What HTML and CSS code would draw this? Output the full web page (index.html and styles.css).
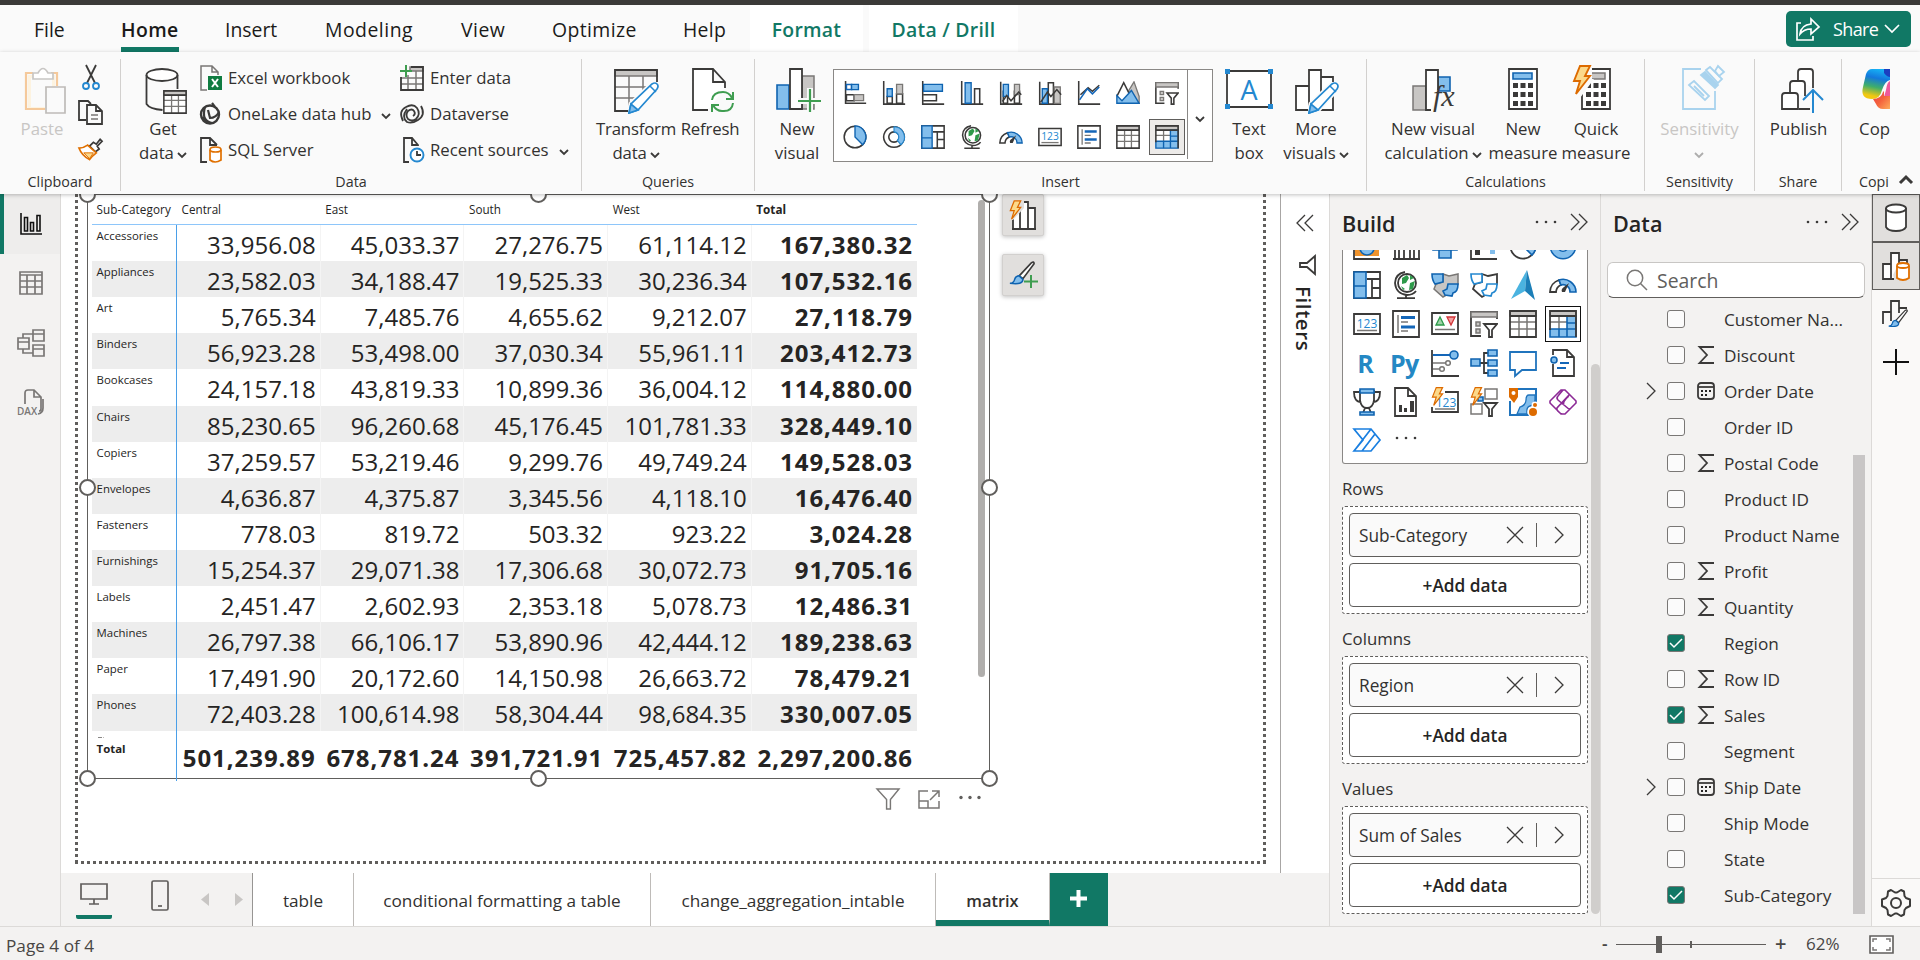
FILE: index.html
```html
<!DOCTYPE html>
<html lang="en">
<head>
<meta charset="utf-8">
<title>Report editor</title>
<link rel="stylesheet" href="styles.css">
</head>
<body>
<svg class="defs" width="0" height="0">
<defs>
<linearGradient id="cop" x1="0.55" y1="0" x2="0.35" y2="1"><stop offset="0" stop-color="#16b1f5"/><stop offset=".3" stop-color="#1478dc"/><stop offset=".6" stop-color="#3fae6a"/><stop offset=".9" stop-color="#f2c811"/></linearGradient>
<linearGradient id="cop2" x1="0" y1="0" x2="1" y2="1"><stop offset="0" stop-color="#e8404a"/><stop offset=".5" stop-color="#f4623c"/><stop offset="1" stop-color="#fdae5c"/></linearGradient>
<symbol id="chev" viewBox="0 0 10 8"><path d="M1 2l4 4 4-4" class="d" stroke-width="1.8"/></symbol>
<symbol id="sbar" viewBox="0 0 28 28"><path class="d" d="M3 0v26h24"/><path class="b" d="M4 4h6v6H4z" fill="#fff"/><path class="bf" d="M10 4h8v6h-8z"/><path class="d" d="M4 16h9v7H4z" fill="#fff"/><path class="gf" d="M13 16h11v7H13z"/></symbol>
<symbol id="scol" viewBox="0 0 28 28"><path class="d" d="M2 0v27h25"/><path class="d" d="M6 18h6v8H6z"/><path class="bf" d="M6 9h6v9H6z"/><path class="d" d="M17 15h7v11h-7z"/><path class="gf" d="M17 4h7v11h-7z"/></symbol>
<symbol id="bar" viewBox="0 0 28 28"><path class="d" d="M2 0v27h25M3 16h15v7H3"/><path class="bf" d="M3 4h22v8H3z"/></symbol>
<symbol id="col" viewBox="0 0 28 28"><path class="d" d="M2 0v27h25M17 26V9h6v17"/><path class="bf" d="M6 2h7v24H6z"/></symbol>
<symbol id="combo1" viewBox="0 0 28 28"><path class="d" d="M2 1v26h25M5 12h5v14H5zM18 12h6v14h-6z"/><path class="bf" d="M5 4h6v14H5z"/><path class="gf" d="M18 4h6v12h-6z"/><path class="d" d="M4 24l5-7 5 6 9-10 3 3"/></symbol>
<symbol id="combo2" viewBox="0 0 28 28"><path class="d" d="M2 1v26h25M12 27V2h6v25"/><path class="bf" d="M5 9h6v17H5z"/><path class="gf" d="M19 7h7v19h-7z"/><path class="d" d="M3 25l8-12 4 5 7-8 5 6"/></symbol>
<symbol id="line" viewBox="0 0 28 28"><path class="d" d="M2 0v27h25M4 16l9-8 5 4 8-7"/><path class="b" d="M3 22L12 9l6 6 8-8" stroke-width="2.2"/></symbol>
<symbol id="area" viewBox="0 0 28 28"><path class="gf" d="M15 11l6-10 6 17v8H16z"/><path class="d" d="M1 18L9 2l8 16" fill="#fff"/><path class="bf" d="M1 26v-9l6 6L18 11l9 15z"/></symbol>
<symbol id="slicer" viewBox="0 0 28 28"><path class="d" d="M11 26H1V2h26v7" fill="#fff"/><path class="gf" d="M1 2h26v5H1zM6 12h4v4H6zM6 19h4v4H6z"/><path class="d" d="M14 14h13l-5 6v7h-3v-7z" fill="#fff"/></symbol>
<symbol id="pie" viewBox="0 0 28 28"><circle cx="14" cy="14" r="12.6" class="d" fill="#fff"/><path class="bf" d="M14 1a13 13 0 0 1 9 22l-9-9z"/></symbol>
<symbol id="donut" viewBox="0 0 28 28"><path class="d" fill="#fff" fill-rule="evenodd" d="M14 2a12 12 0 1 0 .01 0zM14 8a6 6 0 1 1-.01 0z"/><path class="bfl" d="M14 2a12 12 0 0 1 8 21l-4-5a6 6 0 0 0-4-10z"/></symbol>
<symbol id="tree" viewBox="0 0 28 28"><path class="d" d="M1 1h26v26H1zM14 8h13M19 8v19M19 17h8" fill="#fff"/><path class="bf" d="M1 1h12v14H1zM1 15h12v12H1z"/></symbol>
<symbol id="globe" viewBox="0 0 28 28"><circle cx="15" cy="12" r="9" class="d" fill="#fff"/><path d="M10 7l5-3 2 3-3 5-4 1zM18 12l5-2-2 8-4 1zM18 4l4 3-4 2zM9 15l4 3-2 1z" fill="#2e9a4a"/><path class="d" d="M13 1Q3 3 3 12q1 11 12 12 6 0 9-4M14 24v3M5 27.200h18"/></symbol>
<symbol id="gauge" viewBox="0 0 28 28"><path class="d" d="M1 21a13 13 0 0 1 9-12l2 5a8 8 0 0 0-5 7z" fill="#fff"/><path class="bf" d="M10 9a13 13 0 0 1 17 12h-6a7 7 0 0 0-9-7z"/><path d="M20 12l-4 9h-3c-1-2 0-4 2-5z" fill="#3b3a39"/></symbol>
<symbol id="card" viewBox="0 0 28 28"><path class="d" d="M1 4h26v20H1z" fill="#fff" stroke-width="2"/><path class="g" d="M4 20.500h20"/><text x="14" y="17.500" text-anchor="middle" class="num">123</text></symbol>
<symbol id="mcard" viewBox="0 0 28 28"><path class="d" d="M1 1h26v26H1z" fill="#fff" stroke-width="2"/><path class="g" d="M6 5v18M9 12h7M9 21h7"/><path class="b3" d="M9 7.500h14M9 17h14"/></symbol>
<symbol id="kpi" viewBox="0 0 28 28"><path class="d" d="M1 3h26v21H1z" fill="#fff" stroke-width="2"/><path class="g" d="M4 19.500h20"/><path d="M5 15l4-8 4 8z" fill="#9fd3a8" stroke="#2e9a4a" stroke-width="1.300"/><path d="M16 7h8l-4 8z" fill="#f4a0a0" stroke="#d13438" stroke-width="1.300"/></symbol>
<symbol id="table" viewBox="0 0 28 28"><path class="g" d="M1 12h26M1 19h26M10 6v21M18 6v21"/><path class="gf" d="M1 1h26v5H1z"/><path class="d" d="M1 1h26v26H1zM1 6h26" stroke-width="2"/></symbol>
<symbol id="matrix" viewBox="0 0 28 28"><path d="M1 1h26v26H1z" fill="#fff"/><path class="g" d="M1 12h26M10 6v21"/><path class="gf" d="M1 1h26v5H1z"/><path class="bf" d="M18 6h9v7h-9zM18 13h9v6h-9zM1 19h9v8H1zM10 19h8v8h-8zM18 19h9v8h-9z"/><path class="d" d="M1 20V1h26v26M1 6h26" stroke-width="2"/></symbol>
<symbol id="bolt" viewBox="0 0 20 30"><path d="M8 1h10l-5 10h5L4 29l4-13H2z" fill="#fcd98a" stroke="#dd6b00" stroke-width="1.900"/></symbol>
<symbol id="dbl" viewBox="0 0 18 18"><path class="d1" d="M1 1l8 8-8 8M9 1l8 8-8 8"/></symbol>
<symbol id="dots" viewBox="0 0 22 4"><g fill="#3b3a39"><circle cx="2" cy="2" r="1.300"/><circle cx="11" cy="2" r="1.300"/><circle cx="20" cy="2" r="1.300"/></g></symbol>
<symbol id="sigma" viewBox="0 0 18 18"><path d="M17 1H2.500l7.500 8-7.500 8H17" class="d"/></symbol>
<symbol id="cal" viewBox="0 0 18 18"><rect x="1" y="1" width="16" height="16" rx="3" class="d"/><path class="d" d="M1 5h16"/><path d="M4 8h2v2H4zm4 0h2v2H8zm4 0h2v2h-2zM4 12h2v2H4zm4 0h2v2H8z" fill="#252423"/></symbol>
<symbol id="right" viewBox="0 0 10 18"><path class="d1" d="M1 1l8 8-8 8"/></symbol>
<symbol id="x" viewBox="0 0 18 18"><path class="d1" d="M1 1l16 16M17 1L1 17"/></symbol>
<symbol id="pencil" viewBox="0 0 32 32"><path d="M1 31l2-9L24 2q3-2 5 0t0 5L10 28z" fill="#fff" stroke="#fafafa" stroke-width="5"/><path d="M1 31l2-9L24 2q3-2 5 0t0 5L10 28z" fill="#fff" stroke="#2488d0" stroke-width="1.700"/><path d="M1 31l2-9 7 6z" fill="#83beec" stroke="#2488d0" stroke-width="1.700"/><path d="M22 4l6 6" stroke="#2488d0" stroke-width="1.500"/></symbol>
<symbol id="brush" viewBox="0 0 28 28"><path class="d" d="M11 16L24 2q3-2 3 1L15 19z" fill="#fff"/><path class="bf" d="M1 24q4 0 5-4t5-4l4 4q0 6-14 4z"/></symbol>
</defs>
</svg>

<div class="titlebar"></div>
<nav class="tabs">
  <a class="w-file">File</a><a class="w-home"><b>Home</b></a><a class="w-ins">Insert</a><a class="w-mod">Modeling</a><a class="w-view">View</a><a class="w-opt">Optimize</a><a class="w-help">Help</a>
  <a class="ctx c1">Format</a><a class="ctx c2">Data / Drill</a>
  <button class="share"><svg width="24" height="24" viewBox="0 0 24 24"><path d="M5 6H1v17h16v-4M4 17q1-9 11-10V2l8 8-8 7v-5Q8 12 4 17z" fill="none" stroke="#fff" stroke-width="1.700"/></svg><span>Share</span><svg width="16" height="10" viewBox="0 0 16 10"><path d="M1 1l7 7 7-7" fill="none" stroke="#fff" stroke-width="1.700"/></svg></button>
</nav>

<section class="ribbon">
  <div class="grp g-clip"><div class="items">
    <div class="btn off w72"><svg width="48" height="48" viewBox="0 0 48 48"><path d="M10 9h27v13H27v22H10z" fill="#fdf3e0"/><path d="M13 12h21v9H27v20H13z" fill="#fafafa"/><path d="M15 7H8v36h19M33 7h6v13" fill="none" stroke="#f5c99b" stroke-width="2.200"/><path d="M15 13V7h5q5-9 10 0h5v6z" fill="#fff" stroke="#c8c6c4" stroke-width="1.700"/><path d="M28 21h19v26H28z" fill="#fafafa" stroke="#bebbb8" stroke-width="1.700"/></svg><span>Paste</span></div>
    <div class="mini">
      <svg width="24" height="26" viewBox="0 0 24 26"><path class="d" d="M7 1l9 18M17 1L8 19" stroke-width="1.800"/><g fill="none" stroke="#2488d0" stroke-width="1.800"><circle cx="7" cy="22" r="3"/><circle cx="17" cy="22" r="3"/></g></svg>
      <svg width="25" height="26" viewBox="0 0 25 26"><path class="d" d="M8 20H1V1h9l3 3M9 5h9l6 6v13H9zM18 5v6h6"/><path class="g" d="M13 15h7M13 19h7"/></svg>
      <svg width="25" height="24" viewBox="0 0 26 24"><path class="d" d="M12 9l4-4 3 2 4-5 2 2-5 5 2 3-4 3z" fill="#fff"/><path d="M1 11q5 0 9-3l9 8q-4 3-7 7Q4 19 1 11z" fill="#fff" stroke="#e07000" stroke-width="1.800"/><path d="M6 16h10l-4 6z" fill="#fcd98a" stroke="#e07000"/></svg>
    </div></div><label>Clipboard</label></div>

  <div class="grp g-data"><div class="items">
    <div class="btn w68 ml8"><svg width="48" height="48" viewBox="0 0 48 48"><ellipse class="d" cx="23" cy="9" rx="15.500" ry="6" fill="#fff"/><path class="d" d="M7.500 9v29q3 5 16 6M38.500 9v14"/><svg x="24" y="24" width="24" height="24"><rect width="24" height="24" fill="#fff"/><use href="#table"/></svg></svg><span>Get<br>data<svg class="cv"><use href="#chev"/></svg></span></div>
    <ul class="cmd c-a">
      <li><svg width="24" height="26" viewBox="0 0 24 26"><path class="g" d="M8 25H2V1h11l6 6v3M13 1v6h6"/><path d="M9 11h14v14H9z" fill="#107c41"/><path d="M13 14l6 8M19 14l-6 8" stroke="#fff" stroke-width="2"/></svg>Excel workbook</li>
      <li><svg width="24" height="24" viewBox="0 0 24 24"><circle cx="11" cy="12.500" r="9" fill="none" stroke="#3b3a39" stroke-width="2.400"/><path d="M6 5q-4 14 7 16M13 1l3 4M9 8l2 8q6 0 9-6M3 15q3 6 9 6" fill="none" stroke="#3b3a39" stroke-width="2.200"/></svg>OneLake data hub<svg class="cv far"><use href="#chev"/></svg></li>
      <li><svg width="24" height="26" viewBox="0 0 24 26"><path class="d" d="M8 25H2V1h9l7 7M11 1v7h7"/><path d="M11 13v10q5 4 11 0V13" fill="#fff" stroke="#e07000" stroke-width="1.700"/><ellipse cx="16.500" cy="12.500" rx="5.500" ry="2.500" fill="#fff" stroke="#e07000" stroke-width="1.700"/></svg>SQL Server</li>
    </ul>
    <ul class="cmd c-b">
      <li><svg width="24" height="26" viewBox="0 0 24 26"><path class="gf" d="M10 2h13v4H10z"/><path class="g" d="M1 13h22M1 19h22M8 10v15M16 6v19"/><path class="d" d="M1 12v13h22V2H11"/><path d="M6 0v12M0 6h12" stroke="#3f9d50" stroke-width="2"/></svg>Enter data</li>
      <li><svg width="24" height="22" viewBox="0 0 24 22"><path class="d" d="M3 18Q-2 8 6 4q7-4 11 1 4 6-1 11-4 3-8 0-3-4 0-8 4-3 6 0 2 3-1 5M21 3q5 9-3 14-6 4-11 2Q1 14 7 6"/></svg>Dataverse</li>
      <li><svg width="24" height="26" viewBox="0 0 24 26"><path class="d" d="M9 25H4V1h8l6 7v1M12 1v7h6"/><circle cx="17" cy="18" r="6.500" fill="#fff" stroke="#2488d0" stroke-width="1.900"/><path class="d" d="M17 14v4h4"/></svg>Recent sources<svg class="cv far"><use href="#chev"/></svg></li>
    </ul></div><label>Data</label></div>

  <div class="grp g-q"><div class="items">
    <div class="btn w84 ml12"><svg width="48" height="48" viewBox="0 0 48 48"><path class="g" d="M3 21h42M3 32h34M17 9v36M31 9v28"/><path class="gf" d="M3 4h42v6H3z"/><path class="d" d="M45 17V4H3v41h15"/><use href="#pencil" x="16" y="16" width="32" height="32"/></svg><span class="tight">Transform<br>data<svg class="cv"><use href="#chev"/></svg></span></div>
    <div class="btn w64"><svg width="48" height="48" viewBox="0 0 48 48"><path class="d" d="M22 44H7V3h20l12 13v6M27 3v13h12" fill="#fff"/><path d="M26 34q1-8 11-8 6 0 9 6M47 26v7h-7M47 37q-1 9-11 8-6 0-9-6M26 46v-7h7" fill="none" stroke="#3f9d50" stroke-width="2"/></svg><span class="tight">Refresh</span></div>
  </div><label>Queries</label></div>

  <div class="grp g-ins"><div class="items">
    <div class="btn w72 ml6"><svg width="48" height="48" viewBox="0 0 48 48"><path class="gf" d="M29 10h12v33H29z"/><path class="bf" d="M4 19h12v24H4z"/><path class="d" d="M17 3h12v40H17z" fill="#fff"/><path d="M37 22v24M25 35h23" stroke="#fafafa" stroke-width="6"/><path d="M37 23v23M25 35h23" stroke="#3f9d50" stroke-width="2.200"/></svg><span>New<br>visual</span></div>
    <div class="gallery"><div class="gg">
      <i><svg><use href="#sbar"/></svg></i><i><svg><use href="#scol"/></svg></i><i><svg><use href="#bar"/></svg></i><i><svg><use href="#col"/></svg></i><i><svg><use href="#combo1"/></svg></i><i><svg><use href="#combo2"/></svg></i><i><svg><use href="#line"/></svg></i><i><svg><use href="#area"/></svg></i><i><svg><use href="#slicer"/></svg></i>
      <i><svg><use href="#pie"/></svg></i><i><svg><use href="#donut"/></svg></i><i><svg><use href="#tree"/></svg></i><i><svg><use href="#globe"/></svg></i><i><svg><use href="#gauge"/></svg></i><i><svg><use href="#card"/></svg></i><i><svg><use href="#mcard"/></svg></i><i><svg><use href="#table"/></svg></i><i class="sel"><svg><use href="#matrix"/></svg></i>
    </div><div class="more"><svg class="cv"><use href="#chev"/></svg></div></div>
    <div class="btn w56 ml8"><svg width="48" height="48" viewBox="0 0 48 48"><path class="d" d="M2 5h44v36H2z" fill="#fff"/><path d="M0 3h5v5H0zM43 3h5v5h-5zM0 38h5v5H0zM43 38h5v5h-5z" fill="#2488d0"/><text x="24" y="33.500" text-anchor="middle" class="bigA">A</text></svg><span>Text<br>box</span></div>
    <div class="btn w78"><svg width="48" height="48" viewBox="0 0 48 48"><path class="d" d="M4 20h13v24H4zM17 4h12v40H17zM29 11h12v33H29" fill="#fff"/><use href="#pencil" x="16" y="16" width="32" height="32"/></svg><span>More<br>visuals<svg class="cv"><use href="#chev"/></svg></span></div>
  </div><label>Insert</label></div>

  <div class="grp g-calc"><div class="items">
    <div class="btn w108 ml12"><svg width="48" height="48" viewBox="0 0 48 48"><path class="gf" d="M4 20h13v24H4z"/><path class="bf" d="M29 11h12v14H29z"/><path class="d" d="M22 44h-5V4h12v20" fill="#fff"/><text x="24" y="40" class="fx">fx</text></svg><span>New visual<br>calculation<svg class="cv"><use href="#chev"/></svg></span></div>
    <div class="btn w72"><svg width="48" height="48" viewBox="0 0 48 48"><path class="d" d="M10 3h28v40H10z" fill="#fff"/><path class="bf" d="M14 7h19v6H14z"/><path d="M16.500 17v24M24 17v24M31.500 17v24" stroke="#3b3a39" stroke-width="5" stroke-dasharray="5 4"/></svg><span>New<br>measure</span></div>
    <div class="btn w74"><svg width="48" height="48" viewBox="0 0 48 48"><path class="d" d="M10 3h28v40H10z" fill="#fff"/><path class="gf" d="M16 7h17v6H16z"/><path d="M16.500 17v24M24 17v24M31.500 17v24" stroke="#3b3a39" stroke-width="5" stroke-dasharray="5 4"/><path d="M4 0h16v13h2L8 32H2z" fill="#fafafa"/><use href="#bolt" x="0" y="-1" width="20" height="30"/></svg><span>Quick<br>measure</span></div>
  </div><label>Calculations</label></div>

  <div class="grp g-sens"><div class="items">
    <div class="btn off w109"><svg width="48" height="48" viewBox="0 0 48 48"><g fill="#fafafa" stroke="#a9d3ee" stroke-width="1.800"><path d="M25 3H7v40h32V25"/><path d="M13 19l5-4 15 15-4 4zM18 20l10 10"/><path d="M30 4l4-3 12 12-4 4z"/><path d="M39 5l3-5 6 6-5 4z"/><path d="M25 9l4-3 13 13-3 3z" fill="#a9d3ee"/></g></svg><span>Sensitivity<br><svg class="cv"><use href="#chev"/></svg></span></div>
  </div><label>Sensitivity</label></div>

  <div class="grp g-share"><div class="items">
    <div class="btn w87"><svg width="48" height="48" viewBox="0 0 48 48"><g class="d" fill="#fff"><path d="M23 14V6q0-3 3-3h9q3 0 3 3v16M15 26v-8q0-3 3-3h9q3 0 3 3v12M24 43h11"/><path d="M7 43V30q0-3 3-3h10q3 0 3 3v13z"/></g><path d="M38 47V24M28 34l10-10 10 10" fill="none" stroke="#2488d0" stroke-width="2"/></svg><span>Publish</span></div>
  </div><label>Share</label></div>

  <div class="grp g-cop"><div class="items">
    <div class="btn"><svg width="28" height="48" viewBox="0 0 28 48"><path d="M10 3h18v11q-5 1-8 10-2 9-10 9-12 0-9-12L4 8q2-5 6-5z" fill="url(#cop)"/><path d="M22 3h6v8q-3 0-6-4z" fill="#1b3fc0"/><path d="M28 15q-3 1-4 9l-2 7h6z" fill="#ee5a9a"/><path d="M11 33q8 0 10-7l1-1v5h6v13h-7q-5 0-7-5z" fill="url(#cop2)"/></svg><span>Cop</span></div>
  </div><label>Copi</label></div>
  <div class="collapse"><svg width="16" height="11" viewBox="0 0 16 11"><path d="M2 9l6-6 6 6" fill="none" stroke="#3b3a39" stroke-width="3"/></svg></div>
</section>

<main>
  <aside class="rail">
    <div class="act"><svg width="22" height="22" viewBox="0 0 22 22"><path d="M1 0v21h21M4.500 4.500h3V18h-3zM10.500 9.500h3V18h-3zM17 2.500h3V18h-3z" fill="none" stroke="#111" stroke-width="1.600"/></svg></div>
    <div><svg width="24" height="24" viewBox="0 0 24 24"><path d="M1 1h22v22H1zM1 4h22M1 10h22M1 16h22M8 4v19M16 4v19" class="r"/></svg></div>
    <div><svg width="28" height="28" viewBox="0 0 28 28"><path d="M1 9h11v11H1zM1 13h11M16 1h11v11H16zM16 5h11M16 16h11v11H16zM16 20h11M6 9V5h10M6 20v4h10" class="r"/></svg></div>
    <div><svg width="28" height="28" viewBox="0 0 28 28"><path d="M8 15V4q0-3 3-3h6l7 7v12q0 2-2 2M17 1v7h7M26 10v9q0 5-5 6" class="r"/><text x="0" y="26" class="dax">DAX</text></svg></div>
  </aside>

  <div class="center">
    <div class="upper">
      <div class="canvas">
        <div class="page"></div>
        <div class="visual">
          <table>
            <thead><tr><th>Sub-Category</th><th>Central</th><th>East</th><th>South</th><th>West</th><th class="t">Total</th></tr></thead>
            <tbody>
            <tr><td>Accessories</td><td>33,956.08</td><td>45,033.37</td><td>27,276.75</td><td>61,114.12</td><td>167,380.32</td></tr>
            <tr><td>Appliances</td><td>23,582.03</td><td>34,188.47</td><td>19,525.33</td><td>30,236.34</td><td>107,532.16</td></tr>
            <tr><td>Art</td><td>5,765.34</td><td>7,485.76</td><td>4,655.62</td><td>9,212.07</td><td>27,118.79</td></tr>
            <tr><td>Binders</td><td>56,923.28</td><td>53,498.00</td><td>37,030.34</td><td>55,961.11</td><td>203,412.73</td></tr>
            <tr><td>Bookcases</td><td>24,157.18</td><td>43,819.33</td><td>10,899.36</td><td>36,004.12</td><td>114,880.00</td></tr>
            <tr><td>Chairs</td><td>85,230.65</td><td>96,260.68</td><td>45,176.45</td><td>101,781.33</td><td>328,449.10</td></tr>
            <tr><td>Copiers</td><td>37,259.57</td><td>53,219.46</td><td>9,299.76</td><td>49,749.24</td><td>149,528.03</td></tr>
            <tr><td>Envelopes</td><td>4,636.87</td><td>4,375.87</td><td>3,345.56</td><td>4,118.10</td><td>16,476.40</td></tr>
            <tr><td>Fasteners</td><td>778.03</td><td>819.72</td><td>503.32</td><td>923.22</td><td>3,024.28</td></tr>
            <tr><td>Furnishings</td><td>15,254.37</td><td>29,071.38</td><td>17,306.68</td><td>30,072.73</td><td>91,705.16</td></tr>
            <tr><td>Labels</td><td>2,451.47</td><td>2,602.93</td><td>2,353.18</td><td>5,078.73</td><td>12,486.31</td></tr>
            <tr><td>Machines</td><td>26,797.38</td><td>66,106.17</td><td>53,890.96</td><td>42,444.12</td><td>189,238.63</td></tr>
            <tr><td>Paper</td><td>17,491.90</td><td>20,172.60</td><td>14,150.98</td><td>26,663.72</td><td>78,479.21</td></tr>
            <tr><td>Phones</td><td>72,403.28</td><td>100,614.98</td><td>58,304.44</td><td>98,684.35</td><td>330,007.05</td></tr>
            </tbody>
            <tfoot><tr><td><span class="cut"></span>Total</td><td>501,239.89</td><td>678,781.24</td><td>391,721.91</td><td>725,457.82</td><td>2,297,200.86</td></tr></tfoot>
          </table>
          <div class="vscroll"></div>
          <span class="h l t0"></span><span class="h m t0"></span><span class="h r0 t0"></span><span class="h l t1"></span><span class="h r0 t1"></span><span class="h l t2"></span><span class="h m t2"></span><span class="h r0 t2"></span>
          <div class="vtools"><svg width="25" height="23" viewBox="0 0 26 24"><path class="g" d="M1 1h23L15 12v10h-4V12z"/></svg><svg width="22" height="20" viewBox="0 0 22 20"><path class="g" d="M10 1H1v17h20v-7M1 11h9v7M14 1h7v6M12 10l9-9"/></svg><svg width="24" height="5" viewBox="0 0 24 5"><g fill="#605e5c"><circle cx="3" cy="2.500" r="1.700"/><circle cx="12" cy="2.500" r="1.700"/><circle cx="21" cy="2.500" r="1.700"/></g></svg></div>
          <div class="vside">
            <i><svg width="28" height="30" viewBox="0 0 28 30"><path class="d" d="M4 29V9h7v20zM11 29V2h8v27zM19 29V8h7v21zM3 29h24" fill="#fff"/><path d="M2 0h13v8L4 20H0z" fill="#e1dfdd"/><use href="#bolt" x="0" y="0" width="13" height="20"/></svg></i>
            <i><svg width="30" height="30" viewBox="0 0 30 30"><use href="#brush" x="1" y="1" width="26" height="26"/><path d="M23 15v13M16 21.500h14" stroke="#3f9d50" stroke-width="2"/></svg></i>
          </div>
        </div>
      </div>
      <aside class="filters"><svg width="18" height="18" class="flip"><use href="#dbl"/></svg><svg width="18" height="20" viewBox="0 0 18 20"><path class="d" d="M16 1v18L8 12H1V8h7z"/></svg><b>Filters</b></aside>
    </div>
    <div class="pages">
      <div class="pnav"><span class="desk"><svg width="28" height="22" viewBox="0 0 28 22"><path class="r5" d="M1 1h26v15H1zM14 16v5M9 21h10"/></svg></span><svg width="18" height="31" viewBox="0 0 18 31"><rect x="1" y="1" width="16" height="29" rx="1.500" class="r5"/><path class="r5" d="M7 26h4"/></svg><svg width="8" height="13" viewBox="0 0 8 13"><path d="M8 0v13L0 6.500z" fill="#c8c6c4"/></svg><svg width="8" height="13" viewBox="0 0 8 13"><path d="M0 0v13l8-6.500z" fill="#c8c6c4"/></svg></div>
      <a class="p1">table</a><a class="p2">conditional formatting a table</a><a class="p3">change_aggregation_intable</a><a class="p4">matrix</a><a class="add"><svg width="17" height="17" viewBox="0 0 17 17"><path d="M8.500 0v17M0 8.500h17" stroke="#fff" stroke-width="4"/></svg></a>
    </div>
  </div>

  <aside class="pane build">
    <header><h2>Build</h2><svg width="22" height="4"><use href="#dots"/></svg><svg width="18" height="18"><use href="#dbl"/></svg></header>
    <div class="vis"><div class="vg">
      <i><svg viewBox="0 0 28 28"><path d="M2 10h24v14H2z" fill="#f0932b"/><circle cx="14" cy="16" r="7" class="bf"/><path class="d" d="M1 1v26h26"/></svg></i>
      <i><svg viewBox="0 0 28 28"><path class="d" d="M1 27h27M3 27V9h4v18M12 27V9h6v18M22 27V9h5v18"/></svg></i>
      <i><svg viewBox="0 0 28 28"><path class="bf" d="M2 5h24v13H2zM8 18h12v8H8z"/></svg></i>
      <i><svg viewBox="0 0 28 28"><path class="d" d="M1 1v26h26"/><path d="M5 18h5v5H5z" fill="#3b3a39"/><path d="M20 16h5v6h-5z" fill="#83beec"/></svg></i>
      <i><svg><use href="#pie"/></svg></i>
      <i><svg viewBox="0 0 28 28"><circle cx="14" cy="14" r="9" fill="#fff" stroke="#0f63b0" stroke-width="9"/><circle cx="14" cy="14" r="9" fill="none" stroke="#83beec" stroke-width="6"/></svg></i>
      <i><svg><use href="#tree"/></svg></i><i><svg><use href="#globe"/></svg></i>
      <i><svg viewBox="0 0 28 28"><path class="gf" d="M12 3l6 2 9-2v10l-4 7-6 3-5 3-9-8 2-5 7-2z"/><path class="bf" d="M1 3h11v8l-8 2q-3-4-3-10zM17 13h10q0 8-5 9l-1 3-7-1-2-4 4-2z"/></svg></i>
      <i><svg viewBox="0 0 28 28"><path class="d" d="M12 3l6 2 9-2v10l-4 7-6 3-5 3-9-8 2-5 7-2z"/><path d="M1 3h11v8l-8 2q-3-4-3-10zM17 13h10q0 8-5 9l-1 3-7-1-2-4 4-2z" fill="#fff" stroke="#2488d0" stroke-width="1.700"/></svg></i>
      <i><svg viewBox="0 0 28 28"><path d="M18-1L2 28l14-8z" fill="#4ab3e0"/><path d="M18-1l8 30-10-9z" fill="#1c7fb8"/></svg></i>
      <i><svg><use href="#gauge"/></svg></i>
      <i><svg><use href="#card"/></svg></i><i><svg><use href="#mcard"/></svg></i><i><svg><use href="#kpi"/></svg></i><i><svg><use href="#slicer"/></svg></i><i><svg><use href="#table"/></svg></i><i class="sel"><svg><use href="#matrix"/></svg></i>
      <i class="ltr">R</i><i class="ltr">Py</i>
      <i><svg viewBox="0 0 28 28"><path class="d" d="M1 1v26h27"/><path class="b" d="M2 6h17"/><path class="g" d="M2 14h12M2 20h6"/><circle cx="23" cy="6" r="4" class="bf"/><circle cx="17" cy="14" r="2.300" class="g"/><circle cx="11" cy="20" r="2.300" class="g"/></svg></i>
      <i><svg viewBox="0 0 28 28"><path class="d" d="M10 14h9M19 4h-5v20h5"/><path class="bf" d="M1 10h9v7H1zM18 1h9v6h-9zM18 11h9v6h-9zM18 21h9v6h-9z"/></svg></i>
      <i><svg viewBox="0 0 28 28"><path d="M1 3h26v18H13l-7 6v-6H1z" fill="#fff" stroke="#2074bd" stroke-width="1.800"/></svg></i>
      <i><svg viewBox="0 0 28 28"><path class="d" d="M4 6V1h14l7 7v19H4V15M18 1v7h7"/><circle cx="5" cy="11" r="3" class="bf"/><path class="b" d="M11 14h9M8 19h9"/></svg></i>
      <i><svg viewBox="0 0 28 28"><path class="d" d="M7 4H1q0 10 7 10M21 4h6q0 10-7 10M7 2v10q1 8 7 8t7-8V2M12 20l-2 5M16 20l2 5"/><path class="bf" d="M7 1h14v4H7zM7 24h14v3H7z"/></svg></i>
      <i><svg viewBox="0 0 28 28"><path class="d" d="M3 0h13l8 8v20H3zM16 0v8h8" fill="#fff"/><path d="M7 17h3v7H7zM12 20h3v4h-3zM18 13h4v11h-4z" fill="#3b3a39"/></svg></i>
      <i><svg viewBox="0 0 28 28"><path class="d" d="M14 4h13v20H1v-5" fill="#fff"/><path class="g" d="M4 21h20"/><text x="15" y="19" text-anchor="middle" class="num">123</text><use href="#bolt" x="0" y="-1" width="13" height="19"/></svg></i>
      <i><svg viewBox="0 0 28 28"><path class="g" d="M15 1h12v10H15zM1 16h11v10H1z"/><path class="bf" d="M8 9h5v4H8z"/><path class="d" d="M14 15h13l-5 6v7h-3v-7z" fill="#fff"/><use href="#bolt" x="0" y="-1" width="13" height="19"/></svg></i>
      <i><svg viewBox="0 0 28 28"><path d="M8 1h19v26H1V13" fill="#fff" stroke="#2074bd" stroke-width="2"/><path d="M26 7h-6q-3 0-3 5t-6 7l-3 7h10q-1-7 3-8t5-6z" fill="#83beec" stroke="#2074bd" stroke-width="1.300"/><path d="M0 0h9v9l-4 6-5-6z" fill="#dd6b00"/><circle cx="4.500" cy="5" r="2" fill="#fff"/><circle cx="24" cy="24" r="5.500" fill="#fff"/><circle cx="26" cy="17" r="3.500" fill="#fff"/><circle cx="24" cy="24" r="4" fill="#dd6b00"/><circle cx="26" cy="17" r="2" fill="#dd6b00"/></svg></i>
      <i><svg viewBox="0 0 28 28"><path d="M12 2h4l11 11v2L16 26h-4L1 15v-2zM14 2L9 8q-2 2 0 4l12 10M20 7L8 20q-1 3 5 6M20 8q-7 6-5 8" fill="none" stroke="#8c2a96" stroke-width="1.600"/></svg></i>
      <i><svg viewBox="0 0 28 28"><path d="M1 3h17l9 11-9 11H1l9-11zM18 3L1 25M22 8L9 25" fill="none" stroke="#1a7fe0" stroke-width="1.700"/></svg></i>
      <i><svg class="dt"><use href="#dots"/></svg></i>
    </div></div>
    <h3>Rows</h3><div class="well"><div class="pill"><span>Sub-Category</span><svg width="18" height="18"><use href="#x"/></svg><em></em><svg width="10" height="18"><use href="#right"/></svg></div><div class="addd">+Add data</div></div>
    <h3>Columns</h3><div class="well"><div class="pill"><span>Region</span><svg width="18" height="18"><use href="#x"/></svg><em></em><svg width="10" height="18"><use href="#right"/></svg></div><div class="addd">+Add data</div></div>
    <h3>Values</h3><div class="well"><div class="pill"><span>Sum of Sales</span><svg width="18" height="18"><use href="#x"/></svg><em></em><svg width="10" height="18"><use href="#right"/></svg></div><div class="addd">+Add data</div></div>
    <div class="bscroll"></div>
  </aside>

  <aside class="pane data">
    <header><h2>Data</h2><svg width="22" height="4"><use href="#dots"/></svg><svg width="18" height="18"><use href="#dbl"/></svg></header>
    <div class="search"><svg width="22" height="22" viewBox="0 0 22 22"><circle cx="9" cy="9" r="7.700" class="g"/><path class="g" d="M14.500 14.500L21 21"/></svg>Search</div>
    <ul class="fields">
      <li><s></s><u></u><s></s>Customer Na...</li>
      <li><s></s><u></u><s><svg><use href="#sigma"/></svg></s>Discount</li>
      <li><s><svg class="ar"><use href="#right"/></svg></s><u></u><s><svg><use href="#cal"/></svg></s>Order Date</li>
      <li><s></s><u></u><s></s>Order ID</li>
      <li><s></s><u></u><s><svg><use href="#sigma"/></svg></s>Postal Code</li>
      <li><s></s><u></u><s></s>Product ID</li>
      <li><s></s><u></u><s></s>Product Name</li>
      <li><s></s><u></u><s><svg><use href="#sigma"/></svg></s>Profit</li>
      <li><s></s><u></u><s><svg><use href="#sigma"/></svg></s>Quantity</li>
      <li><s></s><u class="on"><svg viewBox="0 0 16 16"><path d="M2 8l4 4 8-8"/></svg></u><s></s>Region</li>
      <li><s></s><u></u><s><svg><use href="#sigma"/></svg></s>Row ID</li>
      <li><s></s><u class="on"><svg viewBox="0 0 16 16"><path d="M2 8l4 4 8-8"/></svg></u><s><svg><use href="#sigma"/></svg></s>Sales</li>
      <li><s></s><u></u><s></s>Segment</li>
      <li><s><svg class="ar"><use href="#right"/></svg></s><u></u><s><svg><use href="#cal"/></svg></s>Ship Date</li>
      <li><s></s><u></u><s></s>Ship Mode</li>
      <li><s></s><u></u><s></s>State</li>
      <li><s></s><u class="on"><svg viewBox="0 0 16 16"><path d="M2 8l4 4 8-8"/></svg></u><s></s>Sub-Category</li>
    </ul>
    <div class="dscroll"></div>
  </aside>

  <aside class="rrail">
    <div class="on"><svg width="24" height="30" viewBox="0 0 24 30"><path class="d" d="M2 5v19q2 4 10 4t10-4V5" fill="#fff"/><ellipse cx="12" cy="5.500" rx="10" ry="4" class="d" fill="#fff"/></svg></div>
    <div class="on"><svg width="28" height="30" viewBox="0 0 28 30"><path class="d" d="M12 28H1V13h8M9 28V2h8v10M17 9h8v3" fill="#fff"/><path d="M15 15v12q6 4 12 0V15" fill="#fff" stroke="#e07000" stroke-width="1.800"/><ellipse cx="21" cy="14.500" rx="6" ry="2.500" fill="#fff" stroke="#e07000" stroke-width="1.800"/></svg></div>
    <div><svg width="28" height="30" viewBox="0 0 28 30"><path class="d" d="M1 25V13h8M9 22V2h8v12M17 9h8"/><use href="#brush" x="4" y="10" width="24" height="20"/></svg></div>
    <div><svg width="26" height="26" viewBox="0 0 26 26"><path d="M13 0v26M0 13h26" stroke="#111" stroke-width="2"/></svg></div>
    <div class="gear"><svg width="30" height="30" viewBox="0 0 30 30"><circle cx="15" cy="15" r="5" fill="none" stroke="#3b3a39" stroke-width="2"/><path fill="none" stroke="#3b3a39" stroke-width="2" stroke-linejoin="round" d="M10 2l4 2.500h2L20 2l3 1.500.5 4.500 1.500 2 4 1.500V18l-4 2-1.500 2-.5 4.500L20 28l-4-2.500h-2L10 28l-3-1.500L6.500 22 5 20l-4-2v-6.500L5 10l1.500-2L7 3.500z"/></svg></div>
  </aside>
</main>

<footer><span>Page 4 of 4</span><div class="zoom"><b>-</b><div class="track"><i></i><em></em></div><b class="pl">+</b><span>62%</span><svg width="25" height="19" viewBox="0 0 25 19"><path d="M1 1h23v17H1z" fill="#fff" stroke="#605e5c" stroke-width="1.600"/><path class="g" d="M4 7V4h4M17 4h4v3M21 12v3h-4M8 15H4v-3"/></svg></div></footer>
</body>
</html>
```

FILE: styles.css
```css
* { box-sizing: border-box; }
body { margin: 0; width: 1920px; height: 960px; overflow: hidden; font: 17px/24px "Open Sans", "Noto Sans", sans-serif; color: #323130; background: #f3f2f1; display: flex; flex-direction: column; }
ul { list-style: none; margin: 0; padding: 0; }
h2, h3 { margin: 0; }
i, s, u, em { font-style: normal; text-decoration: none; }
svg { display: block; flex: none; overflow: visible; }
.defs { position: absolute; }
.d { stroke: #3b3a39; stroke-width: 1.8; }
.d:not([fill]) { fill: none; }
.d1 { fill: none; stroke: #3b3a39; stroke-width: 1.3; }
.g { fill: none; stroke: #797775; stroke-width: 1.5; }
.gf { fill: #c8c6c4; stroke: #797775; stroke-width: 1.5; }
.b { stroke: #1466b8; stroke-width: 1.8; }
.b:not([fill]) { fill: none; }
.b3 { stroke: #1466b8; stroke-width: 3; }
.bf { fill: #83beec; stroke: #0f63b0; stroke-width: 1.6; }
.bfl { fill: #83beec; stroke: #2488d0; stroke-width: 1.3; }
.r { fill: none; stroke: #797775; stroke-width: 1.7; }
.r5 { fill: none; stroke: #605e5c; stroke-width: 1.7; }
.num { font: 12px "Open Sans", sans-serif; fill: #2488d0; }
.bigA { font: 27px "Open Sans", sans-serif; fill: #2488d0; }
.fx { font: italic 30px "Liberation Serif", serif; fill: #3b3a39; }
.dax { font: 600 10px "Open Sans", sans-serif; fill: #797775; }

.titlebar { height: 5px; background: #3b3a38; flex: none; }
.tabs { height: 47px; flex: none; background: #fafafa; display: flex; padding-left: 34px; font-size: 19.4px; line-height: 50px; color: #1b1a19; white-space: nowrap; }
.tabs a { flex: none; }
.w-file { width: 87px; } .w-home { width: 104px; } .w-ins { width: 100px; } .w-mod { width: 136px; letter-spacing: .5px; }
.w-view { width: 91px; letter-spacing: .5px; } .w-opt { width: 131px; letter-spacing: .4px; } .w-help { width: 67px; letter-spacing: .3px; }
.w-home b { display: inline-block; height: 47px; font-weight: 600; border-bottom: 5px solid #117865; width: 58px; letter-spacing: .4px; }
.ctx { background: #fff; color: #117865; font-weight: 600; text-align: center; letter-spacing: .25px; }
.c1 { width: 113px; } .c2 { width: 149px; margin-left: 6px; }
.share { margin: 6px 9px 5px auto; width: 125px; border: 0; border-radius: 5px; background: #117865; color: #fff; font: 18px "Open Sans", sans-serif; display: flex; align-items: center; padding: 0 12px 0 10px; }
.share span { margin: 0 6px 0 13px; letter-spacing: -.6px; }

.ribbon { height: 142px; flex: none; background: #fafafa; display: flex; padding: 7px 0 3px; box-shadow: 0 1px 4px rgba(0,0,0,.25); position: relative; z-index: 3; }
.grp { flex: none; display: flex; flex-direction: column; border-right: 1px solid #d2d0ce; white-space: nowrap; }
.items { display: flex; height: 115px; }
.grp label { font-size: 14.3px; line-height: 18px; padding-top: 1px; text-align: center; }
.g-clip { width: 121px; } .g-data { width: 461px; } .g-q { width: 173px; } .g-ins { width: 612px; }
.g-calc { width: 278px; } .g-sens { width: 110px; } .g-share { width: 87px; } .g-cop { width: 48px; border: 0; }
.g-cop label { padding-left: 16px; }
.g-cop .btn { width: 48px; padding-left: 14px; align-items: flex-end; }
.btn { flex: none; padding-top: 7px; display: flex; flex-direction: column; align-items: center; text-align: center; }
.btn > svg { margin-bottom: 3px; }
.btn span { font-size: 16.8px; }
.btn .tight { letter-spacing: -.2px; }
.off { color: #c8c6c4; }
.off .cv { opacity: .4; }
.cv { display: inline-block; width: 10px; height: 8px; margin-left: 3px; }
.off .cv { margin: 0; }
.cmd .far { margin: 3px 0 0 4px; }
.w56 { width: 56px; } .w64 { width: 64px; } .w68 { width: 68px; } .w72 { width: 72px; } .w74 { width: 74px; }
.w78 { width: 78px; } .w84 { width: 84px; } .w87 { width: 87px; } .w108 { width: 108px; } .w109 { width: 109px; }
.ml6 { margin-left: 6px; } .ml8 { margin-left: 8px; } .ml12 { margin-left: 12px; }
.g-clip .btn { margin-left: 6px; }
.mini { display: grid; grid-template-rows: repeat(3, 36px); align-items: center; justify-items: center; width: 24px; }
.cmd { display: grid; grid-template-rows: repeat(3, 36px); padding-top: 1px; }
.cmd li { display: flex; align-items: center; gap: 5px; font-size: 16.8px; }
.c-a { margin-left: 2px; width: 201px; } .c-b li { gap: 6px; }
.gallery { margin-top: 10px; width: 380px; height: 93px; border: 1px solid #8a8886; background: #fff; display: flex; }
.gg { display: grid; grid-template-columns: repeat(9, 39px); grid-template-rows: 44px 44px; width: 353px; padding-left: 1px; padding-top: 1px; }
.gg i { display: grid; place-items: center; width: 36px; height: 36px; align-self: center; justify-self: center; }
.gg svg { width: 24px; height: 24px; }
.gg .sel { background: #edebe9; border: 1px solid #605e5c; }
.more { border-left: 1px solid #8a8886; flex: 1; display: grid; place-items: center; margin-bottom: 2px; }
.more .cv { margin: 9px 0 0; }
.collapse { padding: 115px 0 0 8px; }

main { height: 732px; flex: none; display: flex; }
.rail { width: 61px; border-right: 1px solid #dcdad8; display: flex; flex-direction: column; }
.rail div { height: 60px; display: grid; place-items: center; padding-left: 2px; }
.rail div + div { padding-bottom: 2px; }
.rail .act { border-left: 4px solid #117865; background: #eeedec; padding: 0 2px 0 0; }
.center { width: 1268px; display: flex; flex-direction: column; }
.upper { height: 679px; display: flex; background: #fff; }
.canvas { flex: 1; position: relative; }
.page { margin-left: 14px; width: 1191px; height: 670px; background: repeating-linear-gradient(#605e5c 0 3px, transparent 3px 6px) 0 0/3px 100% no-repeat, repeating-linear-gradient(#605e5c 0 3px, transparent 3px 6px) 100% 0/3px 100% no-repeat, repeating-linear-gradient(90deg, #605e5c 0 3px, transparent 3px 6px) 0 100%/100% 3px no-repeat; }
.visual { position: absolute; left: 26px; top: 0; width: 903px; height: 585px; border: 1px solid #605e5c; background: #fff; padding-left: 4px; }
table { border-collapse: separate; border-spacing: 0; table-layout: fixed; width: 825px; color: #252423; }
th { height: 30px; padding: 0 0 1px 4.6px; text-align: left; font-size: 11.7px; line-height: 14px; font-weight: 400; border-bottom: 1px solid #8ec6fa; white-space: nowrap; }
th:nth-child(1) { width: 85px; letter-spacing: .1px; } th:nth-child(2), th:nth-child(3), th:nth-child(4), th:nth-child(5) { width: 143.7px; }
th.t { font-weight: 700; }
td { height: 36.12px; padding: 4px 4px 0 0; text-align: right; font-size: 24px; line-height: 32px; }
tbody td { border-right: 1px solid #f4f4f4; }
tbody td:last-child { font-weight: 700; border: 0; letter-spacing: .95px; padding-right: 4px; }
td:first-child { padding: 4px 0 0 4.6px; text-align: left; vertical-align: top; font-size: 11.4px; line-height: 14px; border-right: 1px solid #4a9fe8; }
tbody tr:nth-child(even) { background: #ededed; }
tfoot td { height: 44px; font-weight: 700; vertical-align: top; line-height: 46px; letter-spacing: .95px; white-space: nowrap; padding-right: 5px; }
tfoot td:last-child { padding-right: 4px; }
tfoot td:first-child { line-height: 14px; padding-top: 6px; letter-spacing: 0; }
.cut { display: block; height: 1px; width: 6px; margin: 0 0 4px 1px; background: linear-gradient(90deg, #8a8886 4px, transparent 4px 5px, #bebbb8 5px); }
.vscroll { position: absolute; left: 890px; top: 5px; width: 7px; height: 477px; border-radius: 4px; background: #b0aeac; }
.h { position: absolute; width: 17px; height: 17px; border: 2px solid #605e5c; border-radius: 50%; background: #fff; }
.l { left: -9px; } .m { left: 442px; } .r0 { left: 893px; } .t0 { top: -9px; } .t1 { top: 284px; } .t2 { top: 575px; }
.vtools { position: absolute; left: 788px; top: 593px; display: flex; gap: 17px; align-items: center; }
.vtools svg:last-child { margin: -4px 0 0 1px; }
.vside { position: absolute; left: 914px; top: -1px; display: grid; gap: 18px; }
.vside i { width: 42px; height: 42px; background: #e1dfdd; border: 1px solid #d2d0ce; border-radius: 2px; box-shadow: 0 1px 4px rgba(0,0,0,.25); display: grid; place-items: center; }
.filters { width: 49px; border-left: 1px solid #a8a6a4; display: flex; flex-direction: column; align-items: center; padding-top: 20px; }
.flip { transform: scaleX(-1); }
.filters svg + svg { margin: 23px 0 11px 6px; }
.filters b { writing-mode: vertical-rl; font-size: 20.5px; font-weight: 600; color: #252423; margin-right: 3px; letter-spacing: .6px; }
.pages { height: 53px; display: flex; background: #f3f2f1; font-size: 17.2px; line-height: 55px; text-align: center; white-space: nowrap; }
.pnav { width: 192px; border-right: 1px solid #979593; display: flex; padding: 7px 0 0 15px; }
.desk { height: 39px; width: 36px; border-bottom: 4px solid #117865; border-radius: 0 0 2px 2px; padding: 3px 4px; margin-right: 39px; }
.pnav svg:nth-of-type(2), .pnav svg:nth-of-type(3) { margin-top: 13px; }
.pnav svg:nth-of-type(2) { margin-left: 32px; } .pnav svg:nth-of-type(3) { margin-left: 26px; }
.pages a { background: #fff; border-right: 1px solid #bebbb8; }
.p1 { width: 101px; } .p2 { width: 297px; } .p3 { width: 285px; }
.pages .p4 { width: 114px; border-bottom: 6px solid #117865; font-weight: 600; font-size: 16.4px; }
.pages .add { width: 58px; background: #117865; border: 0; padding: 17px 20px; }

.pane { border-left: 1px solid #dcdad8; position: relative; }
.build { width: 271px; padding-left: 12px; }
.data { width: 271px; padding-left: 6px; }
header { height: 56px; display: flex; align-items: center; padding-top: 2px; }
h2 { font-size: 21.6px; font-weight: 600; color: #252423; padding-top: 2px; }
.build h2 { width: 193px; } .data h2 { width: 199px; padding-left: 6px; }
header svg { margin-top: -2px; }
header svg:last-child { margin-left: 13px; }
.vis { width: 246px; height: 214px; border: 1px solid #8a8886; border-top: 0; background: #fff; overflow: hidden; border-radius: 0 0 3px 3px; }
.vg { display: grid; grid-template-columns: repeat(6, 39.2px); grid-auto-rows: 38.9px; margin: -23.500px 0 0 4px; }
.vg i { width: 36px; height: 36px; display: grid; place-items: center; align-self: center; justify-self: center; }
.vg svg { width: 28px; height: 28px; }
.vg .sel { border: 1px solid #111; }
.vg .dt { width: 22px; height: 4px; margin-top: -4px; }
.ltr { font-size: 25px; font-weight: 700; color: #2488c4; letter-spacing: -.8px; margin-left: -3px; }
h3 { font-size: 16.8px; font-weight: 400; line-height: 24px; margin: 13px 0 5px; }
.well { width: 246px; height: 108px; border: 1px dashed #605e5c; background: #fff; border-radius: 3px; padding: 6px; display: grid; gap: 6px; }
.well + h3 { margin-top: 13px; }
.pill, .addd { height: 44px; border: 1px solid #605e5c; border-radius: 4px; }
.pill { background: #fafafa; display: flex; align-items: center; padding: 0 16px 0 9px; font-size: 17.3px; }
.pill span { flex: 1; padding-top: 1px; }
.pill em { width: 1px; height: 24px; background: #605e5c; margin: 0 17px 0 12px; }
.addd { text-align: center; font-weight: 600; font-size: 17.3px; line-height: 43px; color: #252423; }
.bscroll { position: absolute; left: 261px; top: 170px; width: 9px; height: 550px; border-radius: 5px; background: #d0cecc; }
.search { margin-top: 12px; width: 258px; height: 36px; border: 1px solid #c8c6c4; border-bottom-color: #605e5c; border-radius: 6px; background: #fff; display: flex; align-items: center; gap: 9px; padding: 2px 0 0 18px; font-size: 19.4px; color: #605e5c; }
.search svg { margin-top: -3px; }
.fields { padding: 4px 0 0 36px; }
.fields li { height: 36px; display: flex; align-items: center; font-size: 17.2px; white-space: nowrap; }
.fields s, .fields u { position: relative; top: -1px; }
.fields s { width: 24px; height: 18px; padding-left: 3px; flex: none; }
.fields u { width: 18px; height: 18px; border: 1px solid #797775; border-radius: 3px; background: #fbfbfb; margin-right: 9px; flex: none; }
.fields u + s { width: 30px; }
.fields u.on { background: #117865; }
.fields u svg { width: 16px; height: 16px; fill: none; stroke: #fff; stroke-width: 1.5; }
.fields s svg { width: 18px; height: 18px; }
.fields s .ar { width: 10px; }
.dscroll { position: absolute; left: 252px; top: 261px; width: 12px; height: 459px; background: #c8c6c6; }
.rrail { width: 49px; border-left: 1px solid #dcdad8; background: #faf9f8; display: flex; flex-direction: column; }
.rrail div { height: 48px; display: grid; place-items: center; }
.rrail .on { background: #e1dfdd; border: 1px solid #605e5c; }
.rrail .gear { margin-top: auto; border-top: 1px solid #dcdad8; }
footer { height: 34px; border-top: 1px solid #dcdad8; background: #f3f2f1; display: flex; align-items: center; padding: 5px 0 0 6px; color: #484644; font-size: 17.2px; }
.zoom { margin-left: auto; display: flex; align-items: center; padding-right: 26px; margin-top: -4px; }
.zoom b { font-weight: 600; width: 14px; }
.track { width: 150px; height: 1px; background: #605e5c; display: flex; align-items: center; padding-left: 40px; }
.track i { width: 6px; height: 17px; background: #605e5c; flex: none; }
.track em { width: 2px; height: 7px; background: #605e5c; margin-left: 28px; }
.zoom .pl { margin-left: 9px; width: 31px; font-size: 20px; }
.zoom span { width: 63px; font-size: 17px; }
```
